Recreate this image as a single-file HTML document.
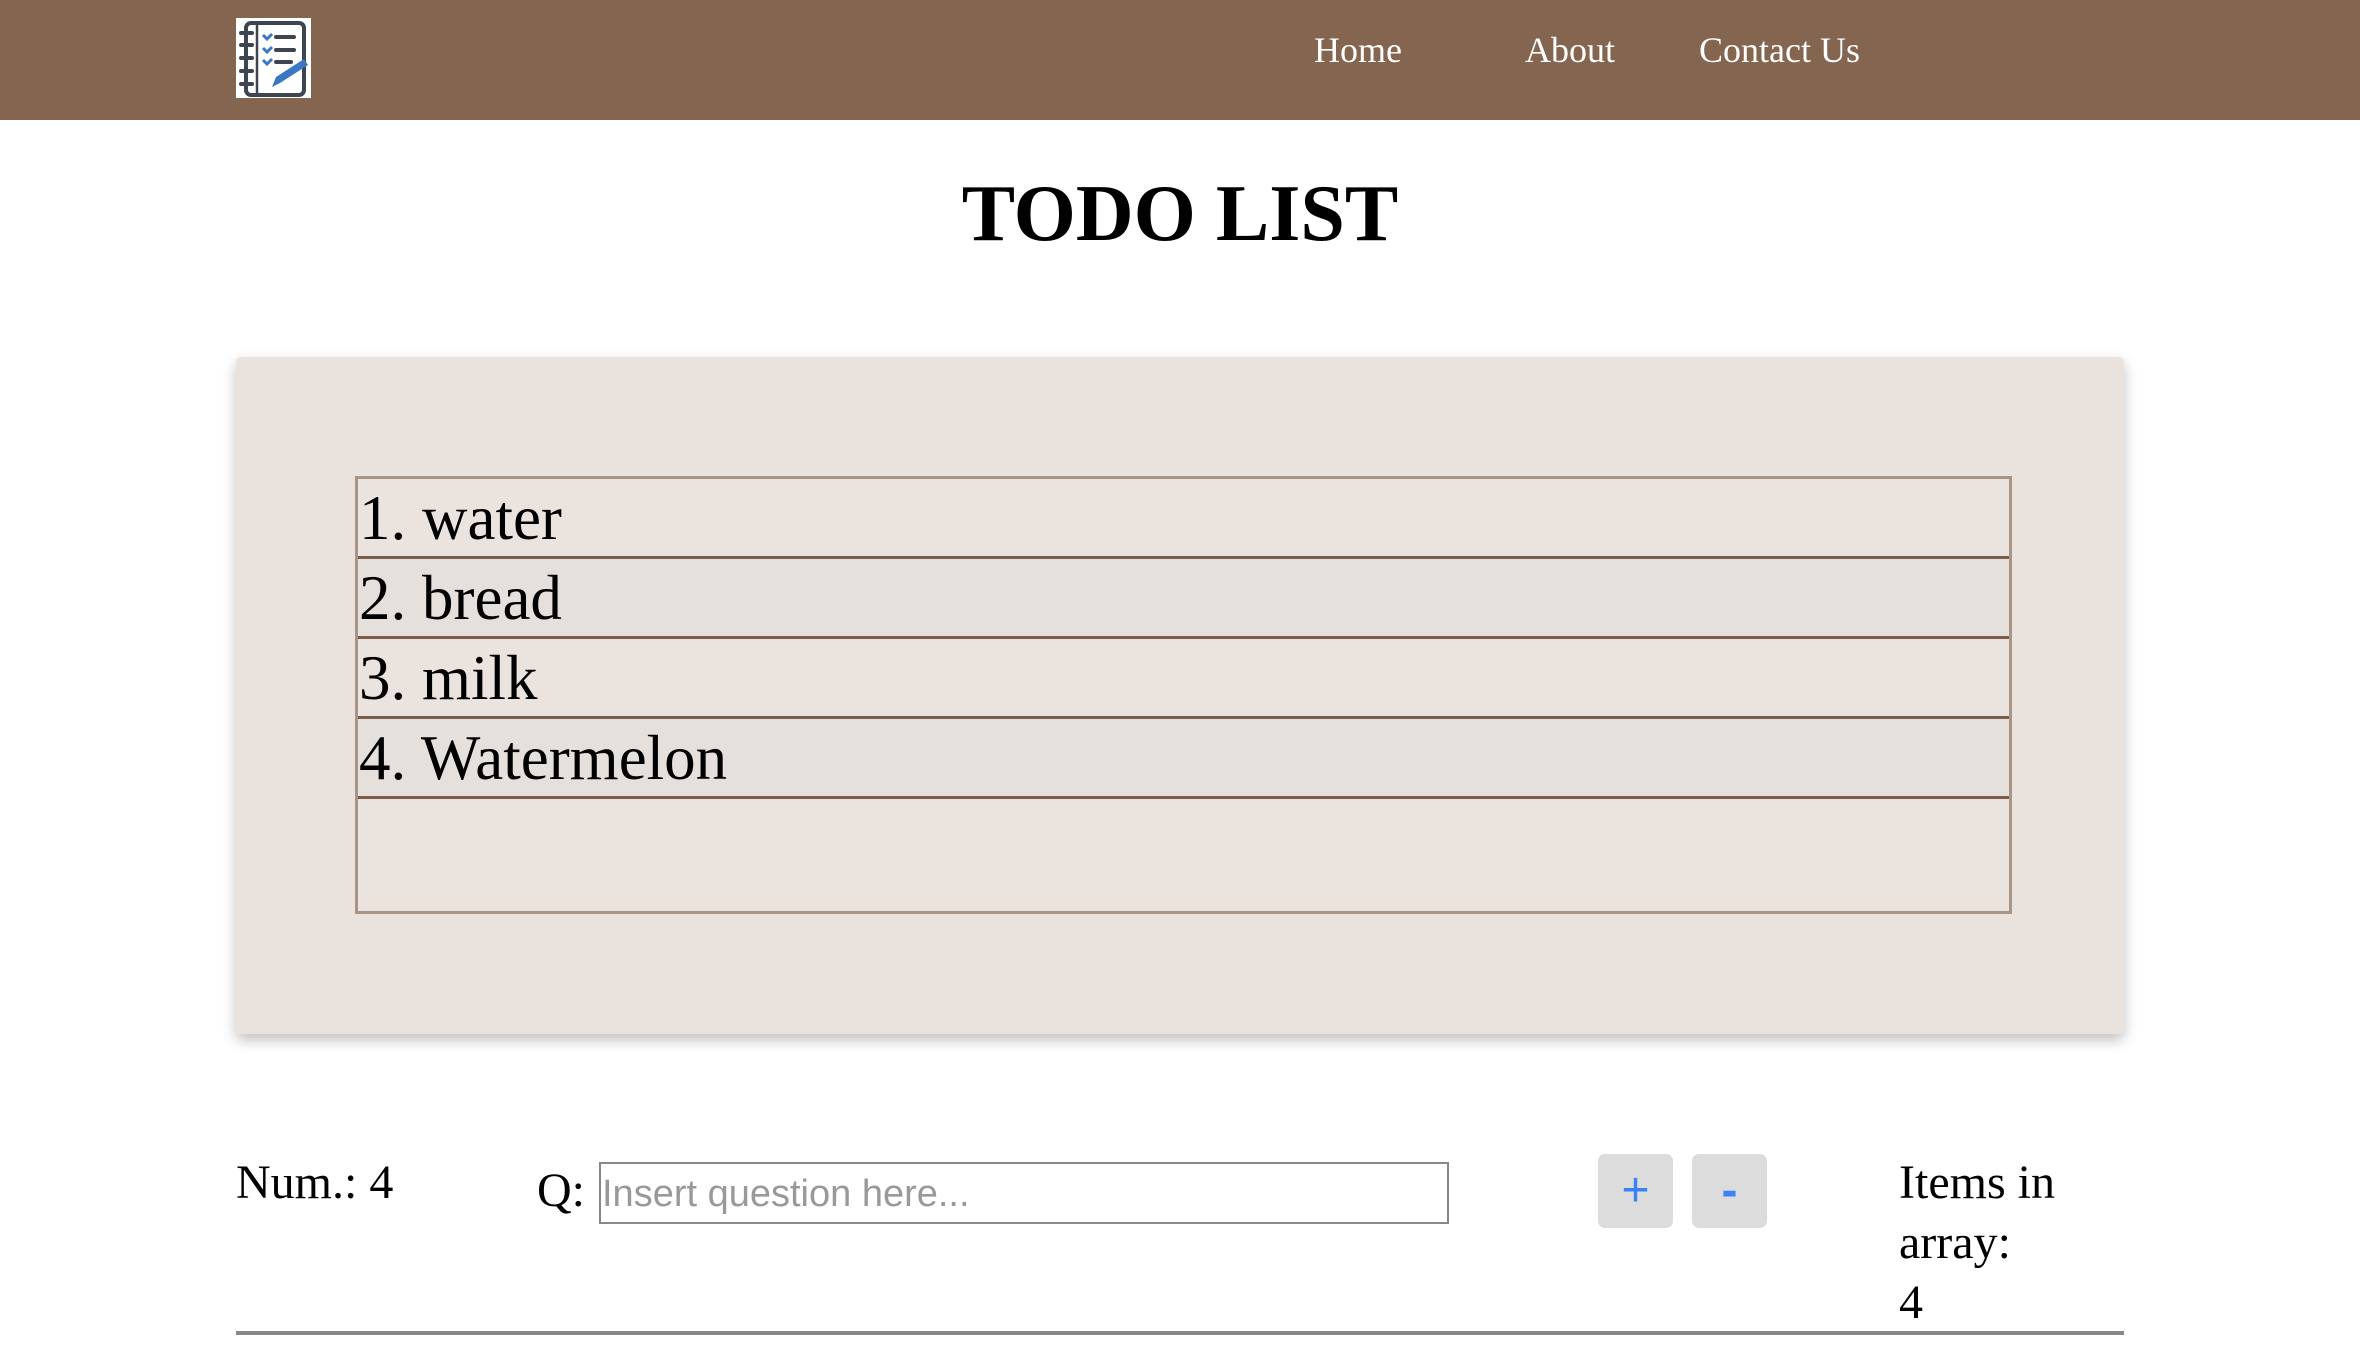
<!DOCTYPE html>
<html><head><meta charset="utf-8"><style>
*{margin:0;padding:0;box-sizing:border-box}
body{width:2360px;height:1370px;background:#fff;font-family:"Liberation Serif",serif;position:relative;overflow:hidden}
.hdr{position:absolute;left:0;top:0;width:2360px;height:120px;background:#84654f}
.logo{position:absolute;left:236px;top:18px;width:75px;height:80px;background:#fff}
.nav{position:absolute;top:29px;color:#fff;font-size:36px}
h1{position:absolute;left:0;width:2360px;top:174px;text-align:center;font-size:80px;font-weight:bold;line-height:1}
.card{position:absolute;left:236px;top:357px;width:1888px;height:677px;background:#eae3dd;border-radius:5px;box-shadow:0 6px 14px rgba(0,0,0,.25)}
.list{position:absolute;left:355px;top:476px;width:1657px;height:438px;border:3px solid #a89585;background:#ebe4de}
.row{height:80px;border-bottom:3px solid #7d5c47;font-size:63px;line-height:78px;padding-left:1px}
.row.b{background:#e5e0dc}
.t{position:absolute;font-size:48px;line-height:60px}
.inp{position:absolute;left:599px;top:1162px;width:850px;height:62px;border:2px solid #888;background:#fff;font-family:"Liberation Sans",sans-serif;color:#999;font-size:38px;line-height:60px;padding-left:1px}
.btn{position:absolute;top:1154px;width:75px;height:74px;background:#dcdcdc;border-radius:7px;color:#3b82f6;font-family:"Liberation Sans",sans-serif;font-size:48px;text-align:center;line-height:74px}
.hr{position:absolute;left:236px;top:1331px;width:1888px;height:4px;background:#888}
</style></head><body>
<div class="hdr">
<svg class="logo" viewBox="0 0 75 80">
<rect x="10" y="5" width="58" height="72" rx="5" fill="none" stroke="#3d4550" stroke-width="4"/>
<line x1="21" y1="5" x2="21" y2="77" stroke="#3d4550" stroke-width="2.5"/>
<g stroke="#3d4550" stroke-width="4" stroke-linecap="round"><line x1="5" y1="15" x2="16" y2="15"/><line x1="5" y1="27" x2="16" y2="27"/><line x1="5" y1="40" x2="16" y2="40"/><line x1="5" y1="53" x2="16" y2="53"/><line x1="5" y1="66" x2="16" y2="66"/>
<line x1="40" y1="19" x2="58" y2="19"/><line x1="40" y1="32" x2="58" y2="32"/><line x1="40" y1="44" x2="55" y2="44"/></g>
<g stroke="#3b78c4" stroke-width="3" fill="none"><path d="M27 17l4 4 5-5"/><path d="M27 30l4 4 5-5"/><path d="M27 42l4 4 5-5"/></g>
<path d="M36 69l4-10 28-18 4 6-28 18z" fill="#3b78c4"/>
</svg>
<div class="nav" style="left:1314px">Home</div>
<div class="nav" style="left:1525px">About</div>
<div class="nav" style="left:1699px">Contact Us</div>
</div>
<h1>TODO LIST</h1>
<div class="card"></div>
<div class="list">
<div class="row">1. water</div>
<div class="row b">2. bread</div>
<div class="row">3. milk</div>
<div class="row b">4. Watermelon</div>
</div>
<div class="t" style="left:236px;top:1153px">Num.: 4</div>
<div class="t" style="left:537px;top:1161px">Q:</div>
<div class="inp">Insert question here...</div>
<div class="btn" style="left:1598px">+</div>
<div class="btn" style="left:1692px;font-weight:bold">-</div>
<div class="t" style="left:1899px;top:1153px">Items in<br>array:<br>4</div>
<div class="hr"></div>
</body></html>
